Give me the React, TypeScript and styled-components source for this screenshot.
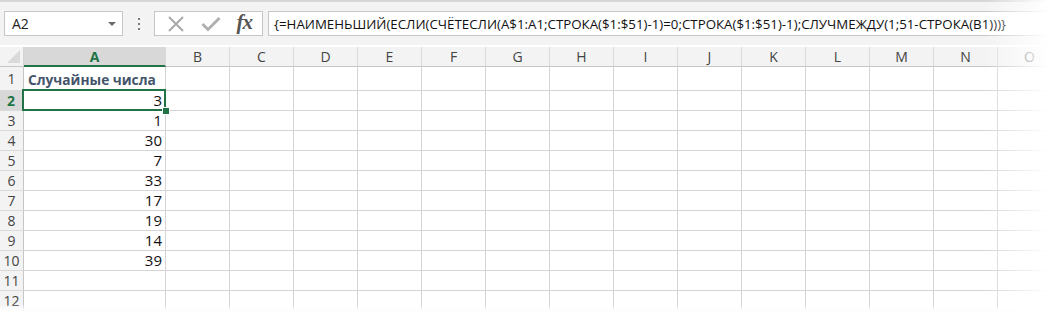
import React from 'react';
import styled, { createGlobalStyle, css } from 'styled-components';

const GREEN = '#217346';
const FORMULA =
  '{=НАИМЕНЬШИЙ(ЕСЛИ(СЧЁТЕСЛИ(A$1:A1;СТРОКА($1:$51)-1)=0;СТРОКА($1:$51)-1);СЛУЧМЕЖДУ(1;51-СТРОКА(B1)))}';
const COLUMNS = ['A', 'B', 'C', 'D', 'E', 'F', 'G', 'H', 'I', 'J', 'K', 'L', 'M', 'N', 'O'];
const VALUES = [3, 1, 30, 7, 33, 17, 19, 14, 39];
const ROW_COUNT = 12;

const GlobalStyle = createGlobalStyle`
  html, body {
    margin: 0;
    padding: 0;
    background: #ffffff;
  }
  body {
    font-family: "Open Sans", "Noto Sans", "Liberation Sans", sans-serif;
  }
`;

const Root = styled.div`
  position: relative;
  width: 1054px;
  height: 313px;
  overflow: hidden;
  background: #ffffff;
`;

const TopBar = styled.div`
  display: flex;
  align-items: flex-start;
  height: 45px;
  padding: 9px 0 0 4px;
  box-sizing: border-box;
  background: #f3f3f3;
  border-top: 2px solid #d6d6d6;
`;

const Box = styled.div`
  display: flex;
  align-items: center;
  height: 25px;
  box-sizing: border-box;
  background: #ffffff;
  border: 1px solid #c6c6c6;
`;

const NameBox = styled(Box)`
  width: 119px;
  padding: 0 6px 0 7px;
  justify-content: space-between;
  font-size: 14px;
  color: #222;
`;

const Caret = styled.span`
  width: 0;
  height: 0;
  border-left: 4px solid transparent;
  border-right: 4px solid transparent;
  border-top: 4px solid #6b6b6b;
`;

const Dots = styled.div`
  display: flex;
  flex-direction: column;
  align-items: center;
  justify-content: center;
  gap: 3px;
  width: 31px;
  height: 25px;

  span {
    width: 2px;
    height: 2px;
    background: #7a7a7a;
  }
`;

const Buttons = styled(Box)`
  width: 109px;
  padding: 0 10px 0 12px;
  justify-content: space-between;
`;

const FxLabel = styled.span`
  font-family: "Liberation Serif", "DejaVu Serif", serif;
  font-style: italic;
  font-size: 21px;
  font-weight: bold;
  color: #555;
  letter-spacing: -1px;
  line-height: 1;
  margin-top: -2px;
`;

const FormulaBox = styled(Box)`
  flex: 1;
  margin-left: 5px;
  padding-left: 5px;
  border-right: none;
  font-size: 13.3px;
  color: #111;
  white-space: nowrap;
  overflow: hidden;
`;

const Sheet = styled.div`
  display: grid;
  grid-template-columns: 24px 142px repeat(14, 64px);
  grid-template-rows: 20px 24px repeat(11, 20px);
  margin-top: 2px;
`;

const Corner = styled.div`
  position: relative;
  background: #f3f3f3;
  border-right: 1px solid #d4d4d4;
  border-bottom: 1px solid #c6c6c6;

  &::after {
    content: '';
    position: absolute;
    right: 3px;
    bottom: 3px;
    border-left: 13px solid transparent;
    border-bottom: 13px solid #dadada;
  }
`;

const ColHead = styled.div<{ $active?: boolean }>`
  display: flex;
  align-items: center;
  justify-content: center;
  background: #f3f3f3;
  border-right: 1px solid #dadada;
  border-bottom: 1px solid #c6c6c6;
  font-size: 14px;
  color: #444;
  ${({ $active }) =>
    $active &&
    css`
      background: #d8d8d8;
      color: ${GREEN};
      font-weight: bold;
      border-bottom: 2px solid ${GREEN};
    `}
`;

const RowHead = styled.div<{ $active?: boolean }>`
  display: flex;
  align-items: center;
  justify-content: center;
  background: #f3f3f3;
  border-right: 1px solid #c6c6c6;
  border-bottom: 1px solid #dadada;
  font-size: 14px;
  color: #444;
  ${({ $active }) =>
    $active &&
    css`
      background: #d8d8d8;
      color: ${GREEN};
      font-weight: bold;
      border-right: 2px solid ${GREEN};
    `}
`;

const Cell = styled.div<{ $title?: boolean; $selected?: boolean }>`
  position: relative;
  display: flex;
  align-items: flex-end;
  justify-content: flex-end;
  padding: 0 3px 0 0;
  border-right: 1px solid #d4d4d4;
  border-bottom: 1px solid #d4d4d4;
  font-size: 15px;
  line-height: 19px;
  color: #111;
  white-space: nowrap;
  ${({ $title }) =>
    $title &&
    css`
      justify-content: flex-start;
      padding-left: 4px;
      padding-bottom: 1px;
      font-weight: bold;
      font-size: 13.7px;
      color: #44546a;
    `}
  ${({ $selected }) =>
    $selected &&
    css`
      z-index: 2;
      &::before {
        content: '';
        position: absolute;
        left: -2px;
        top: -2px;
        right: -1px;
        bottom: -1px;
        border: 2px solid ${GREEN};
      }
      &::after {
        content: '';
        position: absolute;
        right: -5px;
        bottom: -5px;
        width: 6px;
        height: 6px;
        background: ${GREEN};
        border: 1px solid #ffffff;
      }
    `}
`;

const RightFade = styled.div`
  position: absolute;
  top: 0;
  right: 0;
  bottom: 0;
  width: 70px;
  z-index: 3;
  pointer-events: none;
  background: linear-gradient(to right, rgba(255, 255, 255, 0), #ffffff 92%);
`;

const BottomFade = styled.div`
  position: absolute;
  left: 0;
  right: 0;
  bottom: 0;
  height: 9px;
  z-index: 3;
  pointer-events: none;
  background: linear-gradient(to bottom, rgba(255, 255, 255, 0), #ffffff 80%);
`;

const CancelIcon = () => (
  <svg width="18" height="18" viewBox="0 0 18 18">
    <path d="M2 2 L16 16 M16 2 L2 16" stroke="#a8a8a8" strokeWidth="2" fill="none" />
  </svg>
);

const CheckIcon = () => (
  <svg width="20" height="16" viewBox="0 0 20 16">
    <path d="M1.5 8 L7 13.5 L18.5 2" stroke="#b0b0b0" strokeWidth="3" fill="none" />
  </svg>
);

function App() {
  const rows = Array.from({ length: ROW_COUNT }, (_, i) => i + 1);

  return (
    <Root>
      <GlobalStyle />
      <TopBar>
        <NameBox>
          <span>A2</span>
          <Caret />
        </NameBox>
        <Dots>
          <span />
          <span />
          <span />
        </Dots>
        <Buttons>
          <CancelIcon />
          <CheckIcon />
          <FxLabel>fx</FxLabel>
        </Buttons>
        <FormulaBox>{FORMULA}</FormulaBox>
      </TopBar>
      <Sheet>
        <Corner />
        {COLUMNS.map((c) => (
          <ColHead key={c} $active={c === 'A'}>
            {c}
          </ColHead>
        ))}
        {rows.map((r) => (
          <React.Fragment key={r}>
            <RowHead $active={r === 2}>{r}</RowHead>
            {COLUMNS.map((c) => {
              if (c !== 'A') return <Cell key={c} />;
              if (r === 1)
                return (
                  <Cell key={c} $title>
                    Случайные числа
                  </Cell>
                );
              const v = VALUES[r - 2];
              return (
                <Cell key={c} $selected={r === 2}>
                  {v}
                </Cell>
              );
            })}
          </React.Fragment>
        ))}
      </Sheet>
      <RightFade />
      <BottomFade />
    </Root>
  );
}

export default App;
